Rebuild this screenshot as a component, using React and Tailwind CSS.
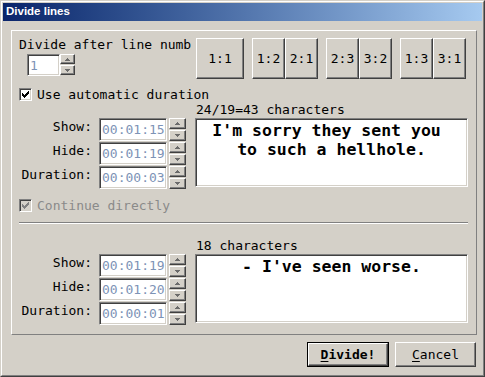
import React from 'react';

const mono = "font-['DejaVu_Sans_Mono',monospace] text-[13px] leading-[15px] text-black";
const raised = "bg-[#d4d0c8] border border-t-white border-l-white border-r-[#404040] border-b-[#404040] shadow-[inset_-1px_-1px_0_#808080]";
const sunken = "border border-t-[#808080] border-l-[#808080] border-r-white border-b-white shadow-[inset_1px_1px_0_#404040,inset_-1px_-1px_0_#d4d0c8]";

// pixel columns of the classic 7x7 check mark
const checkCols = [2, 3, 4, 3, 2, 1, 0];

function Check({ checked, disabled, label }) {
  return (
    <div className="flex items-center h-[13px] ml-[7px]">
      <div className={`w-[13px] h-[13px] flex items-center justify-center ${sunken} ${disabled ? 'bg-[#d4d0c8]' : 'bg-white'}`}>
        {checked && (
          <svg width="7" height="7" viewBox="0 0 7 7" shapeRendering="crispEdges">
            {checkCols.map((y, x) => (
              <rect key={x} x={x} y={y} width="1" height="3" fill={disabled ? '#808080' : '#000'} />
            ))}
          </svg>
        )}
      </div>
      <span className={`ml-[5px] ${mono} ${disabled ? '!text-[#8a8a8a]' : ''}`}>{label}</span>
    </div>
  );
}

function Arrow({ down }) {
  return (
    <svg width="5" height="3" viewBox="0 0 5 3" shapeRendering="crispEdges">
      <path
        d={down ? 'M0 0h5v1H0zM1 1h3v1H1zM2 2h1v1H2z' : 'M2 0h1v1H2zM1 1h3v1H1zM0 2h5v1H0z'}
        fill="#6b6b6b"
      />
    </svg>
  );
}

function SpinButtons({ width, half }) {
  return (
    <div className="flex flex-col gap-[1px]" style={{ width }}>
      <div className={`${raised} flex items-center justify-center`} style={{ height: half }}>
        <Arrow />
      </div>
      <div className={`${raised} flex items-center justify-center`} style={{ height: half }}>
        <Arrow down />
      </div>
    </div>
  );
}

function TimeRow({ label, value }) {
  return (
    <div className="flex items-start h-[23px]">
      <div className={`w-[80px] text-right pt-[1px] ${mono}`}>{label}</div>
      <div className={`ml-[7px] w-[68px] h-[23px] bg-white flex items-center pl-[2px] ${sunken}`}>
        <span className={`${mono} !text-[#7d93b6]`}>{value}</span>
      </div>
      <div className="ml-[2px]">
        <SpinButtons width={17} half={11} />
      </div>
    </div>
  );
}

function Block({ times, lines }) {
  return (
    <div className="flex">
      <div className="flex flex-col gap-[1px]">
        <TimeRow label="Show:" value={times[0]} />
        <TimeRow label="Hide:" value={times[1]} />
        <TimeRow label="Duration:" value={times[2]} />
      </div>
      <div className={`ml-[9px] w-[273px] h-[69px] bg-white pt-[2px] ${sunken}`}>
        {lines.map((l) => (
          <div key={l} className="text-center whitespace-pre font-['DejaVu_Sans_Mono',monospace] font-bold text-[16.5px] leading-[19px] text-black">
            {l}
          </div>
        ))}
      </div>
    </div>
  );
}

function RatioButton({ label, wide }) {
  return (
    <div className={`${raised} ${wide ? 'w-[48px]' : 'w-[33px]'} h-[41px] flex items-center justify-center ${mono}`}>
      {label}
    </div>
  );
}

export default function App() {
  return (
    <div className="w-[485px] h-[377px] bg-[#d4d0c8] border border-t-[#d4d0c8] border-l-[#d4d0c8] border-r-[#404040] border-b-[#404040]">
      <div className="h-full border border-t-white border-l-white border-r-[#808080] border-b-[#808080] p-[1px] flex flex-col">
        {/* title bar */}
        <div className="h-[18px] shrink-0 flex items-center pl-[3px] bg-gradient-to-r from-[#0a246a] to-[#a6caf0]">
          <span className="font-['Liberation_Sans',Arial,sans-serif] font-bold text-[11.5px] text-white">Divide lines</span>
        </div>

        {/* main panel */}
        <div className="mt-[9px] ml-[8px] w-[466px] h-[305px] shrink-0 border border-t-white border-l-white border-r-[#808080] border-b-[#808080] flex flex-col">
          <div className="flex mt-[7px]">
            <div className="w-[184px] flex flex-col">
              {/* label is cut by the ratio buttons in the dialog */}
              <div className={`-mt-[1px] pl-[7px] whitespace-nowrap ${mono}`}>Divide after line numb</div>
              <div className="flex mt-[2px] ml-[15px]">
                <div className={`w-[33px] h-[22px] bg-white flex items-center pl-[2px] ${sunken}`}>
                  <span className={`${mono} !text-[#7d93b6]`}>1</span>
                </div>
                <SpinButtons width={15} half={10} />
              </div>
            </div>
            <div className="flex">
              <RatioButton label="1:1" wide />
              <div className="flex ml-[8px]">
                <RatioButton label="1:2" />
                <RatioButton label="2:1" />
              </div>
              <div className="flex ml-[8px]">
                <RatioButton label="2:3" />
                <RatioButton label="3:2" />
              </div>
              <div className="flex ml-[8px]">
                <RatioButton label="1:3" />
                <RatioButton label="3:1" />
              </div>
            </div>
          </div>

          <div className="mt-[9px]">
            <Check checked label="Use automatic duration" />
          </div>

          <div className={`ml-[184px] mt-[1px] ${mono}`}>24/19=43 characters</div>
          <div className="mt-[1px]">
            <Block
              times={['00:01:15', '00:01:19', '00:00:03']}
              lines={["I'm sorry they sent you ", 'to such a hellhole.']}
            />
          </div>

          <div className="mt-[10px]">
            <Check checked disabled label="Continue directly" />
          </div>

          <div className="mt-[10px] ml-[7px] w-[449px] border-t border-t-[#808080] border-b border-b-white" />

          <div className={`ml-[184px] mt-[14px] ${mono}`}>18 characters</div>
          <div className="mt-[1px]">
            <Block times={['00:01:19', '00:01:20', '00:00:01']} lines={["- I've seen worse."]} />
          </div>
        </div>

        {/* dialog buttons */}
        <div className="mt-[7px] flex justify-end gap-[6px] pr-[6px]">
          <div className="w-[82px] h-[25px] border border-black">
            <div className={`${raised} h-full flex items-center justify-center ${mono} font-bold`}>
              <span className="underline underline-offset-2">D</span>ivide!
            </div>
          </div>
          <div className={`${raised} w-[81px] h-[25px] flex items-center justify-center ${mono}`}>
            <span className="underline underline-offset-2">C</span>ancel
          </div>
        </div>
      </div>
    </div>
  );
}
